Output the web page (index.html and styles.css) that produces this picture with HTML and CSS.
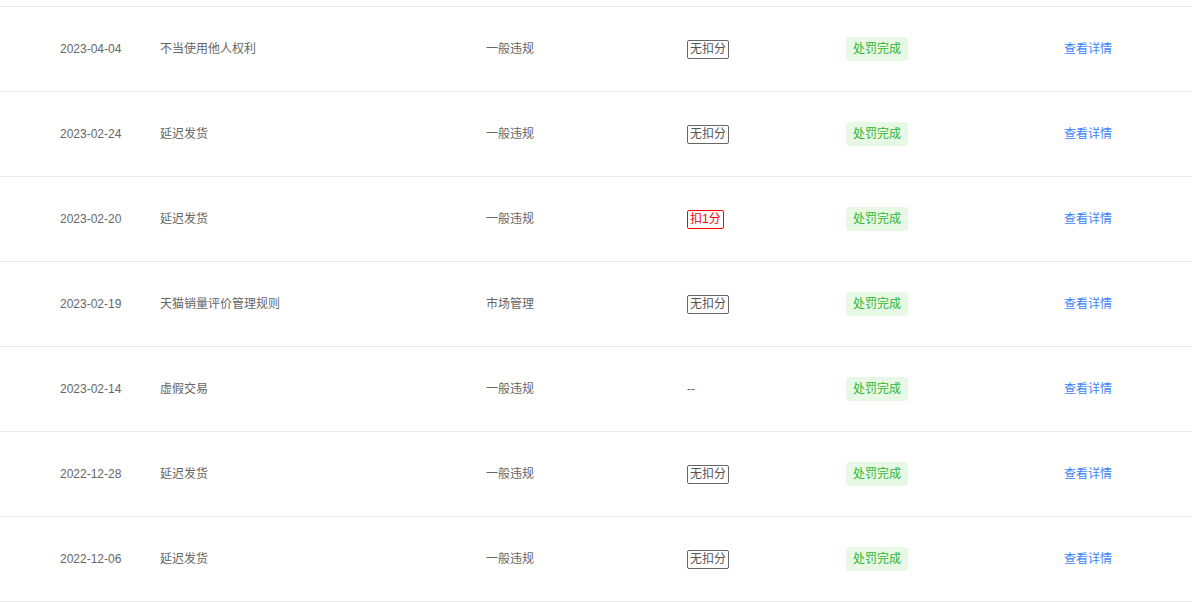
FILE: index.html
```html
<!DOCTYPE html>
<html lang="zh-CN">
<head>
    <meta charset="UTF-8" />
    <title>违规记录</title>
    <link rel="stylesheet" href="styles.css">
</head>
<body>
    <div class="record-list">
        <table class="record-table">
            <colgroup>
                <col class="col-date">
                <col class="col-reason">
                <col class="col-type">
                <col class="col-score">
                <col class="col-status">
                <col class="col-action">
            </colgroup>
            <tbody>
                <tr>
                    <td class="date">2023-04-04</td>
                    <td>不当使用他人权利</td>
                    <td>一般违规</td>
                    <td><span class="score-tag">无扣分</span></td>
                    <td><span class="status-tag">处罚完成</span></td>
                    <td><a class="detail-link" href="#">查看详情</a></td>
                </tr>
                <tr>
                    <td class="date">2023-02-24</td>
                    <td>延迟发货</td>
                    <td>一般违规</td>
                    <td><span class="score-tag">无扣分</span></td>
                    <td><span class="status-tag">处罚完成</span></td>
                    <td><a class="detail-link" href="#">查看详情</a></td>
                </tr>
                <tr>
                    <td class="date">2023-02-20</td>
                    <td>延迟发货</td>
                    <td>一般违规</td>
                    <td><span class="score-tag score-minus">扣1分</span></td>
                    <td><span class="status-tag">处罚完成</span></td>
                    <td><a class="detail-link" href="#">查看详情</a></td>
                </tr>
                <tr>
                    <td class="date">2023-02-19</td>
                    <td>天猫销量评价管理规则</td>
                    <td>市场管理</td>
                    <td><span class="score-tag">无扣分</span></td>
                    <td><span class="status-tag">处罚完成</span></td>
                    <td><a class="detail-link" href="#">查看详情</a></td>
                </tr>
                <tr>
                    <td class="date">2023-02-14</td>
                    <td>虚假交易</td>
                    <td>一般违规</td>
                    <td>--</td>
                    <td><span class="status-tag">处罚完成</span></td>
                    <td><a class="detail-link" href="#">查看详情</a></td>
                </tr>
                <tr>
                    <td class="date">2022-12-28</td>
                    <td>延迟发货</td>
                    <td>一般违规</td>
                    <td><span class="score-tag">无扣分</span></td>
                    <td><span class="status-tag">处罚完成</span></td>
                    <td><a class="detail-link" href="#">查看详情</a></td>
                </tr>
                <tr>
                    <td class="date">2022-12-06</td>
                    <td>延迟发货</td>
                    <td>一般违规</td>
                    <td><span class="score-tag">无扣分</span></td>
                    <td><span class="status-tag">处罚完成</span></td>
                    <td><a class="detail-link" href="#">查看详情</a></td>
                </tr>
            </tbody>
        </table>
    </div>
</body>
</html>
```

FILE: styles.css
```css
/* 页面 */
body {
    margin: 0;
    padding: 6px 0 0;
    background: #fff;
    font-family: "Liberation Sans", "Noto Sans CJK SC", sans-serif;
    font-size: 12px;
    color: #666;
}

/* 表格 */
.record-table {
    width: 1192px;
    border-collapse: collapse;
    table-layout: fixed;
    border-top: 1px solid #e8e8e8;
}

.col-date { width: 160px; }
.col-reason { width: 326px; }
.col-type { width: 201px; }
.col-score { width: 159px; }
.col-status { width: 218px; }
.col-action { width: 128px; }

.record-table td {
    height: 84px;
    padding: 0;
    border-bottom: 1px solid #e8e8e8;
    vertical-align: middle;
    white-space: nowrap;
    line-height: 17px;
}

.record-table td.date {
    padding-left: 60px;
}

/* 扣分标签 */
.score-tag {
    display: inline-block;
    padding: 0 2px;
    border: 1px solid #666;
    border-radius: 2px;
    color: #555;
    line-height: 17px;
}

.score-minus {
    border-color: #f00;
    color: #f00;
}

/* 状态标签 */
.status-tag {
    display: inline-block;
    padding: 0 7px;
    height: 24px;
    line-height: 24px;
    border-radius: 4px;
    background: #e7f8e5;
    color: #2fb52f;
}

/* 查看详情 */
.detail-link {
    color: #3b7ffe;
    text-decoration: none;
}
```
